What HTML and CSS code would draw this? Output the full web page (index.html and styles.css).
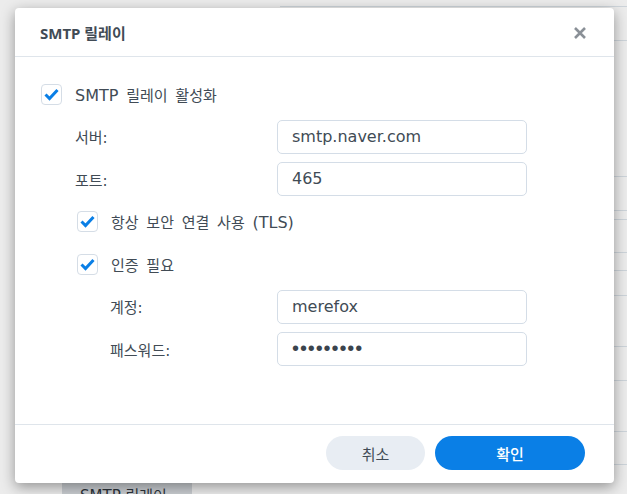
FILE: index.html
```html
<!DOCTYPE html>
<html lang="ko">
<head>
<meta charset="utf-8">
<title>SMTP 릴레이</title>
<link rel="stylesheet" href="styles.css">
</head>
<body>
<div class="page">
  <div class="bg-table">
    <div class="bg-row h34"></div>
    <div class="bg-row h136"></div>
    <div class="bg-row h34"></div>
    <div class="bg-row h9"></div>
    <div class="bg-row h33"></div>
    <div class="bg-row h18"></div>
    <div class="bg-row h25"></div>
    <div class="bg-row h51"></div>
    <div class="bg-row h34"></div>
    <div class="bg-row h51"></div>
    <div class="bg-row h34"></div>
  </div>
  <div class="bg-button">SMTP 릴레이</div>

  <div class="dialog">
    <div class="dlg-header">
      <div class="dlg-title">SMTP 릴레이</div>
      <svg class="dlg-close" width="14" height="14" viewBox="0 0 14 14"><path d="M2 2 L12 12 M12 2 L2 12" stroke="#8a9097" stroke-width="2.6" stroke-linecap="butt"/></svg>
    </div>
    <div class="dlg-body">
      <div class="row">
        <label class="check"><span class="box"><svg width="21" height="21" viewBox="0 0 21 21"><polyline points="4.5,10.5 8.5,14.5 16.5,6" fill="none" stroke="#0a7fe6" stroke-width="3"/></svg></span><span class="check-text"><span class="lat">SMTP</span> 릴레이 활성화</span></label>
      </div>
      <div class="row field">
        <span class="label lvl1">서버:</span>
        <div class="input">smtp.naver.com</div>
      </div>
      <div class="row field">
        <span class="label lvl1">포트:</span>
        <div class="input">465</div>
      </div>
      <div class="row lvl1">
        <label class="check"><span class="box"><svg width="21" height="21" viewBox="0 0 21 21"><polyline points="4.5,10.5 8.5,14.5 16.5,6" fill="none" stroke="#0a7fe6" stroke-width="3"/></svg></span><span class="check-text">항상 보안 연결 사용 <span class="lat">(TLS)</span></span></label>
      </div>
      <div class="row lvl1">
        <label class="check"><span class="box"><svg width="21" height="21" viewBox="0 0 21 21"><polyline points="4.5,10.5 8.5,14.5 16.5,6" fill="none" stroke="#0a7fe6" stroke-width="3"/></svg></span><span class="check-text">인증 필요</span></label>
      </div>
      <div class="row field">
        <span class="label lvl2">계정:</span>
        <div class="input">merefox</div>
      </div>
      <div class="row field">
        <span class="label lvl2">패스워드:</span>
        <div class="input password">•••••••••</div>
      </div>
    </div>
    <div class="dlg-footer">
      <button class="btn btn-cancel">취소</button>
      <button class="btn btn-ok">확인</button>
    </div>
  </div>
</div>
</body>
</html>
```

FILE: styles.css
```css
* { box-sizing: border-box; }
html, body { margin: 0; padding: 0; }
body {
  background: #ececec;
  font-family: "DejaVu Sans", "Noto Sans CJK KR", sans-serif;
  color: #414b55;
}
.page {
  position: relative;
  width: 627px;
  height: 494px;
  overflow: hidden;
}
.bg-table {
  margin-left: 280px;
  padding-top: 6px;
}
.bg-row { border-top: 1px solid #cdd4da; }
.bg-row:last-child { border-bottom: 1px solid #cdd4da; }
.h34 { height: 34px; }
.h136 { height: 136px; }
.h9 { height: 9px; }
.h33 { height: 33px; }
.h18 { height: 18px; }
.h25 { height: 25px; }
.h51 { height: 51px; }
.bg-button {
  margin-top: 16px;
  margin-left: 62px;
  width: 130px;
  height: 30px;
  background: #c9cdd1;
  color: #2c333a;
  font-size: 15px;
  padding: 3px 0 0 18px;
}

.dialog {
  position: absolute;
  left: 15px;
  top: 8px;
  width: 599px;
  height: 475px;
  background: #fff;
  border-radius: 4px;
  box-shadow: 0 4px 14px rgba(0, 0, 0, 0.38);
  display: flex;
  flex-direction: column;
}
.dlg-header {
  height: 49px;
  border-bottom: 1px solid #dfe5eb;
  display: flex;
  align-items: center;
  justify-content: space-between;
  padding: 0 27px 0 25px;
}
.dlg-title {
  font-family: "Noto Sans", "Noto Sans CJK KR", sans-serif;
  font-size: 15px;
  font-weight: 700;
  color: #414b55;
}
.dlg-close { display: block; margin-top: 1px; }

.dlg-body {
  flex: 1;
  padding: 20px 26px 0 26px;
  display: flex;
  flex-direction: column;
  gap: 8.5px;
}
.row {
  height: 34px;
  display: flex;
  align-items: center;
}
.row.lvl1 { padding-left: 36px; }
.field {
  display: grid;
  grid-template-columns: 236px 250px;
  align-items: center;
}
.label {
  font-size: 15px;
  color: #414b55;
}
.label.lvl1 { padding-left: 34px; }
.label.lvl2 { padding-left: 69px; }
.check {
  display: flex;
  align-items: center;
  gap: 13px;
}
.box {
  width: 21px;
  height: 21px;
  border: 1px solid #d5dde6;
  border-radius: 4px;
  background: #fff;
  position: relative;
  display: block;
}
.box svg { position: absolute; left: -1px; top: -1px; }
.check-text { font-size: 15px; color: #414b55; word-spacing: 3px; }
.lat { font-size: 16px; }
.input {
  height: 34px;
  border: 1px solid #d4dde7;
  border-radius: 5px;
  padding: 0 0 0 14px;
  font-size: 16px;
  line-height: 32px;
  color: #414b55;
}
.input.password {
  font-family: "Liberation Sans", sans-serif;
  font-size: 20px;
  letter-spacing: 0.9px;
  line-height: 31px;
  color: #3b444d;
}

.dlg-footer {
  height: 59px;
  border-top: 1px solid #dfe5eb;
  display: flex;
  justify-content: flex-end;
  align-items: flex-start;
  padding: 11px 29px 0 0;
  gap: 10px;
}
.btn {
  height: 34px;
  border: none;
  border-radius: 17px;
  font-family: "DejaVu Sans", "Noto Sans CJK KR", sans-serif;
  font-size: 15px;
  padding: 0;
}
.btn-cancel {
  width: 99px;
  background: #e8edf3;
  color: #414b55;
}
.btn-ok {
  width: 150px;
  background: #0a7fe6;
  color: #fff;
  font-weight: 500;
}
```
